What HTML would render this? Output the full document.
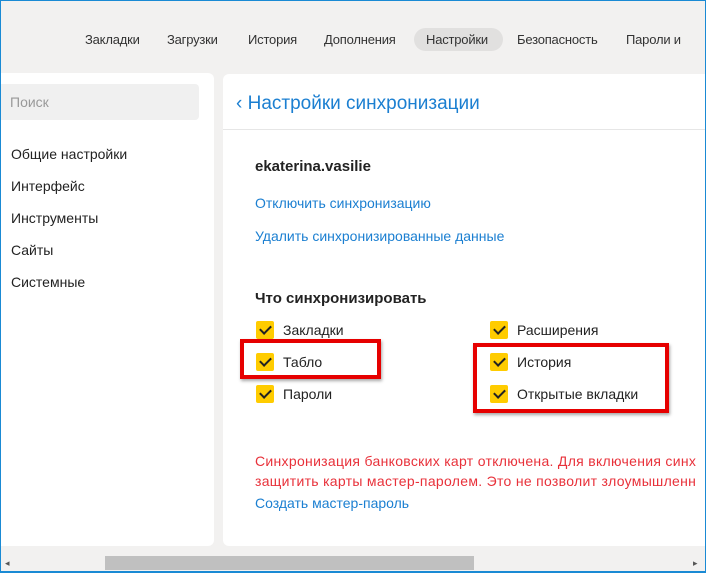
<!DOCTYPE html>
<html><head><meta charset="utf-8"><style>
*{margin:0;padding:0;box-sizing:border-box}
body{width:706px;height:573px;background:#f2f1f0;font-family:"Liberation Sans",sans-serif;position:relative;overflow:hidden}
.frame{position:absolute;left:0;top:0;width:706px;height:573px;border:1px solid #1a8ad4;border-bottom-width:2px;pointer-events:none}
.a{position:absolute;white-space:nowrap}
.tab{font-size:13px;color:#333;top:32px;letter-spacing:-0.2px}
.pill{position:absolute;left:414px;top:28px;width:89px;height:23px;background:#e1e0df;border-radius:12px}
.left{position:absolute;left:0;top:73px;width:214px;height:473px;background:#fff;border-radius:0 6px 6px 0}
.right{position:absolute;left:223px;top:74px;width:483px;height:472px;background:#fff;border-radius:6px 0 0 6px}
.search{position:absolute;left:0;top:84px;width:199px;height:36px;background:#f0f0f0;border-radius:0 4px 4px 0}
.menu{font-size:14px;color:#222;left:11px}
.link{font-size:14px;color:#1b7fd1}
.cb{position:absolute;width:18px;height:18px;background:#ffcc00;border-radius:2px}
.cb:after{content:"";position:absolute;left:6px;top:2px;width:5px;height:9px;border:solid #222;border-width:0 2px 2px 0;transform:rotate(45deg)}
.lab{font-size:14px;color:#222}
.red{font-size:14px;color:#e8313a}
.box{position:absolute;border:4px solid #e60000;box-shadow:1px 2px 3px rgba(0,0,0,.35)}
</style></head><body>
<div class="pill"></div>
<div class="a tab" style="left:85px">Закладки</div>
<div class="a tab" style="left:167px">Загрузки</div>
<div class="a tab" style="left:248px">История</div>
<div class="a tab" style="left:324px">Дополнения</div>
<div class="a tab" style="left:426px">Настройки</div>
<div class="a tab" style="left:517px">Безопасность</div>
<div class="a tab" style="left:626px">Пароли и</div>
<div class="left"></div>
<div class="search"></div>
<div class="a" style="left:10px;top:94px;font-size:14px;color:#999">Поиск</div>
<div class="a menu" style="top:146px">Общие настройки</div>
<div class="a menu" style="top:178px">Интерфейс</div>
<div class="a menu" style="top:210px">Инструменты</div>
<div class="a menu" style="top:242px">Сайты</div>
<div class="a menu" style="top:274px">Системные</div>
<div class="right"></div>
<div class="a" style="left:223px;top:129px;width:483px;height:1px;background:#e6e6e6"></div>
<div class="a" style="left:236px;top:93px;font-size:19px;color:#1b7fd1">‹ Настройки синхронизации</div>
<div class="a" style="left:255px;top:158px;font-size:15px;font-weight:bold;color:#222">ekaterina.vasilie</div>
<div class="a link" style="left:255px;top:195px">Отключить синхронизацию</div>
<div class="a link" style="left:255px;top:228px">Удалить синхронизированные данные</div>
<div class="a" style="left:255px;top:290px;font-size:15px;font-weight:bold;color:#222">Что синхронизировать</div>
<div class="cb" style="left:256px;top:321px"></div><div class="a lab" style="left:283px;top:322px">Закладки</div>
<div class="cb" style="left:256px;top:353px"></div><div class="a lab" style="left:283px;top:354px">Табло</div>
<div class="cb" style="left:256px;top:385px"></div><div class="a lab" style="left:283px;top:386px">Пароли</div>
<div class="cb" style="left:490px;top:321px"></div><div class="a lab" style="left:517px;top:322px">Расширения</div>
<div class="cb" style="left:490px;top:353px"></div><div class="a lab" style="left:517px;top:354px">История</div>
<div class="cb" style="left:490px;top:385px"></div><div class="a lab" style="left:517px;top:386px">Открытые вкладки</div>
<div class="box" style="left:240px;top:339px;width:141px;height:40px"></div>
<div class="box" style="left:473px;top:343px;width:196px;height:70px"></div>
<div class="a red" style="left:255px;top:453px;letter-spacing:0.3px">Синхронизация банковских карт отключена. Для включения синх</div>
<div class="a red" style="left:255px;top:473px;letter-spacing:0.3px">защитить карты мастер-паролем. Это не позволит злоумышленн</div>
<div class="a link" style="left:255px;top:495px">Создать мастер-пароль</div>
<div class="a" style="left:105px;top:556px;width:369px;height:14px;background:#c0c0c0"></div>
<div class="a" style="left:5px;top:558px;font-size:9px;color:#555">◂</div>
<div class="a" style="left:693px;top:558px;font-size:9px;color:#555">▸</div>
<div class="frame"></div>
</body></html>
